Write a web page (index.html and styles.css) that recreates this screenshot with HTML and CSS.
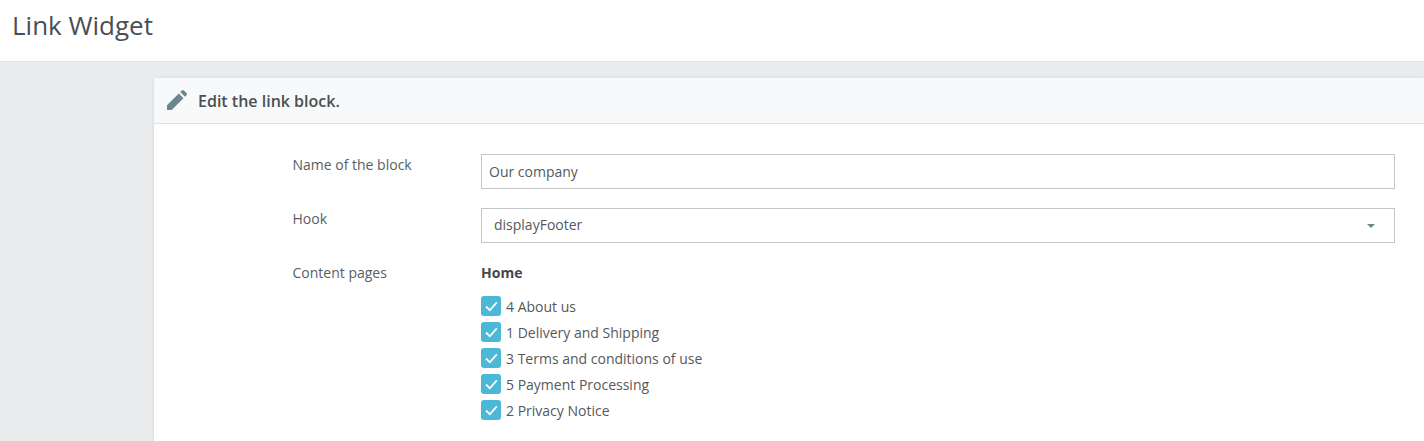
FILE: index.html
```html
<!DOCTYPE html>
<html lang="en">
<head>
<meta charset="utf-8">
<title>Link Widget</title>
<link rel="stylesheet" href="styles.css">
</head>
<body>
<header class="page-head"><h1 class="page-title">Link Widget</h1></header>
<main class="content">
  <section class="card">
    <div class="card-head">
      <svg class="pencil" width="20" height="20" viewBox="0 0 24 24" aria-hidden="true"><path d="M0 24v-5.6L14.2 4.2l5.6 5.6L5.6 24zM15.9 2.5l1.6-1.6a2.2 2.2 0 0 1 3.1 0l2.5 2.5a2.2 2.2 0 0 1 0 3.1l-1.6 1.6z"/></svg>
      <h2 class="card-title">Edit the link block.</h2>
    </div>
    <div class="form">
      <div class="row row-name">
        <div class="label">Name of the block</div>
        <div class="field"><div class="input">Our company</div></div>
      </div>
      <div class="row row-hook">
        <div class="label">Hook</div>
        <div class="field"><div class="input select">displayFooter<span class="caret"></span></div></div>
      </div>
      <div class="row">
        <div class="label">Content pages</div>
        <div class="field">
          <div class="tree-root">Home</div>
          <ul class="checks">
            <li class="check"><span class="box"><svg width="20" height="20" viewBox="0 0 20 20"><path class="tick" d="M5 10.5l3.8 3.8 7-8"/></svg></span>4 About us</li>
            <li class="check"><span class="box"><svg width="20" height="20" viewBox="0 0 20 20"><path class="tick" d="M5 10.5l3.8 3.8 7-8"/></svg></span>1 Delivery and Shipping</li>
            <li class="check"><span class="box"><svg width="20" height="20" viewBox="0 0 20 20"><path class="tick" d="M5 10.5l3.8 3.8 7-8"/></svg></span>3 Terms and conditions of use</li>
            <li class="check"><span class="box"><svg width="20" height="20" viewBox="0 0 20 20"><path class="tick" d="M5 10.5l3.8 3.8 7-8"/></svg></span>5 Payment Processing</li>
            <li class="check"><span class="box"><svg width="20" height="20" viewBox="0 0 20 20"><path class="tick" d="M5 10.5l3.8 3.8 7-8"/></svg></span>2 Privacy Notice</li>
          </ul>
        </div>
      </div>
    </div>
  </section>
</main>
</body>
</html>
```
FILE: styles.css
```css
* { box-sizing: border-box; }
html, body { height: 100%; }
body {
  margin: 0;
  overflow: hidden;
  background: #eaebec;
  color: #414141;
  font-family: "Open Sans", sans-serif;
  font-size: 14px;
  line-height: 20px;
}
.page-head {
  height: 62px;
  background: #fff;
  border-bottom: 1px solid #dfe1e3;
  padding: 7px 0 0 12px;
}
.page-title {
  margin: 0;
  font-size: 26px;
  font-weight: 400;
  line-height: 36px;
  color: #4a4e54;
}
.content { padding: 16px 0 0 154px; }
.card {
  background: #fff;
  height: 363px;
  border-radius: 3px 0 0 0;
  box-shadow: 0 0 4px rgba(0, 0, 0, .08);
}
.card-head {
  display: flex;
  align-items: center;
  height: 46px;
  padding-left: 13px;
  background: #f8f9fa;
  border-bottom: 1px solid #dfe1e3;
}
.pencil { fill: #6c868e; flex: none; margin-top: -2px; }
.card-title {
  margin: 0 0 0 11px;
  font-size: 16px;
  font-weight: 600;
  line-height: 20px;
  color: #4a4f53;
}
.form { padding: 30px 29px 0 139px; }
.row { display: flex; }
.row-name { margin-bottom: 19px; }
.row-hook { margin-bottom: 20px; }
.label { width: 188px; flex: none; line-height: 20px; color: #5a5e62; margin-left: -0.5px; margin-right: 0.5px; }
.row-name .label { padding-top: 1px; }
.row-hook .label { padding-top: 1px; }
.field { flex: 1; min-width: 0; }
.input {
  height: 35px;
  padding: 0 7px;
  border: 1px solid #c4c6c7;
  line-height: 33px;
  color: #55595c;
}
.select { position: relative; padding-left: 12px; line-height: 31px; }
.caret {
  position: absolute;
  right: 19px;
  top: 15px;
  width: 0;
  height: 0;
  border-left: 4px solid transparent;
  border-right: 4px solid transparent;
  border-top: 4px solid #6c868e;
}
.tree-root { font-weight: 700; color: #44484d; line-height: 20px; }
.checks { list-style: none; margin: 11px 0 0; padding: 0; }
.check { display: flex; align-items: center; gap: 5px; height: 26px; color: #55595c; }
.box {
  display: block;
  width: 20px;
  height: 20px;
  margin-bottom: 2px;
  flex: none;
  border-radius: 3px;
  background: #4bb8d8;
}
.box svg { display: block; }
.tick { fill: none; stroke: #fff; stroke-width: 1.8; }
```
